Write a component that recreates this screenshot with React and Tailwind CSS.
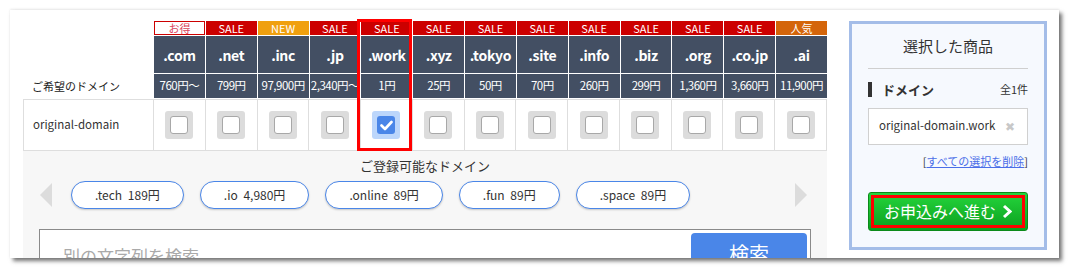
import React from "react";

const domains = [
  { tld: ".com", price: "760円〜", badge: "お得", kind: "deal" },
  { tld: ".net", price: "799円", badge: "SALE", kind: "sale" },
  { tld: ".inc", price: "97,900円", badge: "NEW", kind: "new" },
  { tld: ".jp", price: "2,340円〜", badge: "SALE", kind: "sale" },
  { tld: ".work", price: "1円", badge: "SALE", kind: "sale", checked: true },
  { tld: ".xyz", price: "25円", badge: "SALE", kind: "sale" },
  { tld: ".tokyo", price: "50円", badge: "SALE", kind: "sale" },
  { tld: ".site", price: "70円", badge: "SALE", kind: "sale" },
  { tld: ".info", price: "260円", badge: "SALE", kind: "sale" },
  { tld: ".biz", price: "299円", badge: "SALE", kind: "sale" },
  { tld: ".org", price: "1,360円", badge: "SALE", kind: "sale" },
  { tld: ".co.jp", price: "3,660円", badge: "SALE", kind: "sale" },
  { tld: ".ai", price: "11,900円", badge: "人気", kind: "hot" },
];

const suggestions = [".tech 189円", ".io 4,980円", ".online 89円", ".fun 89円", ".space 89円"];

const badgeClass = {
  deal: "bg-white border border-[#cc0000] text-[#d9435a]",
  sale: "bg-[#cc0000] text-white",
  new: "bg-[#f0a00f] text-white",
  hot: "bg-[#d4650a] text-white",
};

const Checkbox = ({ checked }) =>
  checked ? (
    <div className="w-[28px] h-[28px] rounded-[3px] bg-[#bcd6fb] flex items-center justify-center">
      <div className="w-[18px] h-[18px] rounded-[3px] bg-[#4a86e8] flex items-center justify-center">
        <svg width="13" height="11" viewBox="0 0 13 11">
          <path d="M1.5 5.5 L5 9 L11.5 2" fill="none" stroke="white" strokeWidth="2.6" strokeLinecap="round" strokeLinejoin="round" />
        </svg>
      </div>
    </div>
  ) : (
    <div className="w-[28px] h-[28px] rounded-[3px] bg-[#dcdcdc] flex items-center justify-center">
      <div className="w-[18px] h-[18px] rounded-[3px] bg-white border border-[#a8a8a8]"></div>
    </div>
  );

const App = () => {
  return (
    <div
      className="w-[1070px] h-[269px] bg-white pt-[10px] pl-[10px]"
      style={{ fontFamily: '"Noto Sans CJK JP", "DejaVu Sans", sans-serif' }}
    >
      <div className="w-[1049px] h-[248px] bg-white overflow-hidden shadow-[3px_3px_4px_rgba(0,0,0,0.55),0_-1px_2px_rgba(0,0,0,0.08)] flex pl-[13px] pt-[11px] text-[#333]">
        {/* left column */}
        <div className="w-[804px] flex flex-col">
          <div className="relative">
            {/* header */}
            <div className="grid grid-cols-[130px_repeat(13,minmax(0,1fr))] gap-x-px">
              <div className="flex items-end h-[77px]">
                <div className="h-[24px] flex items-center pl-[9px] text-[11px] leading-none text-[#222]">ご希望のドメイン</div>
              </div>
              {domains.map((d) => (
                <div key={d.tld} className="flex flex-col gap-y-px">
                  <div className={`h-[14px] flex items-center justify-center text-[11px] leading-none ${badgeClass[d.kind]}`}>
                    {d.badge}
                  </div>
                  <div className="h-[37px] bg-[#434f63] flex items-center justify-center text-white font-bold text-[14px] leading-none tracking-[-0.3px]">
                    {d.tld}
                  </div>
                  <div className="h-[24px] bg-[#434f63] flex items-center justify-center text-white text-[11.5px] leading-none tracking-[-0.5px] whitespace-nowrap">
                    {d.price}
                  </div>
                </div>
              ))}
            </div>
            {/* checkbox row */}
            <div className="mt-px grid grid-cols-[129px_repeat(13,minmax(0,1fr))] gap-x-px bg-[#dedede] border border-[#dedede] h-[52px]">
              <div className="bg-white flex items-center pl-[9px] text-[11.5px] text-[#333]">original-domain</div>
              {domains.map((d) => (
                <div key={d.tld} className="bg-white flex items-center justify-center">
                  <Checkbox checked={d.checked} />
                </div>
              ))}
            </div>
            {/* highlight overlay */}
            <div className="absolute left-[334px] top-[-2px] w-[55px] h-[132px] border-[3px] border-[#ff0000] pointer-events-none"></div>
          </div>

          {/* suggestions */}
          <div className="flex-1 bg-[#f7f7f7] flex flex-col pt-[6px]">
            <div className="text-center text-[13px] leading-[18px] text-[#333]">ご登録可能なドメイン</div>
            <div className="mt-[6px] flex items-center pl-[17px] pr-[20px]">
              <svg width="12" height="24" viewBox="0 0 12 24">
                <path d="M12 0 L0 12 L12 24 Z" fill="#dcdcdc" />
              </svg>
              <div className="flex-1 flex gap-[16px] pl-[19px]">
                {suggestions.map((s) => (
                  <div
                    key={s}
                    className="h-[28px] px-[23px] rounded-full border border-[#4a86e8] bg-white shadow-[0_1px_2px_rgba(0,0,0,0.2)] flex items-center text-[12px] text-[#333] whitespace-nowrap [word-spacing:3px]"
                  >
                    {s}
                  </div>
                ))}
              </div>
              <svg width="12" height="24" viewBox="0 0 12 24">
                <path d="M0 0 L12 12 L0 24 Z" fill="#dcdcdc" />
              </svg>
            </div>
            <div className="mt-[20px] mx-[16px] h-[50px] bg-white border border-[#8a8a8a] flex justify-between pl-[23px] pr-[3px] pt-[3px]">
              <div className="pt-[14px] text-[17px] leading-none text-[#aaa]">別の文字列を検索</div>
              <div className="w-[116px] h-[46px] bg-[#4a86e8] rounded-t-[4px] flex justify-center pt-[11px] text-white text-[20px] leading-none">
                検索
              </div>
            </div>
          </div>
        </div>

        {/* right panel */}
        <div className="ml-[22px] w-[198px] h-[229px] border-[3px] border-[#a4bde8] bg-[#f6f9fe] px-[16px] flex flex-col">
          <div className="h-[45px] border-b border-[#cfcfcf] flex items-center justify-center text-[15px] text-[#333]">
            選択した商品
          </div>
          <div className="mt-[12px] flex items-center justify-between">
            <div className="flex items-center">
              <div className="w-[4px] h-[15px] bg-[#333]"></div>
              <div className="ml-[10px] font-bold text-[13px] leading-none text-[#333]">ドメイン</div>
            </div>
            <div className="text-[11px] text-[#333]">全1件</div>
          </div>
          <div className="mt-[10px] h-[37px] bg-white border border-[#d0d0d0] flex items-center justify-between pl-[10px] pr-[12px]">
            <span className="text-[11.5px] text-[#333]">original-domain.work</span>
            <span className="text-[12px] font-bold text-[#c8c8c8] leading-none">✖</span>
          </div>
          <div className="mt-[8px] text-right text-[11px] leading-[16px] text-[#333]">
            [<span className="text-[#4a6ee8] underline">すべての選択を削除</span>]
          </div>
          <div className="mt-[23px] h-[39px] rounded-[3px] border border-[#0c8a1a] bg-gradient-to-b from-[#24d53c] to-[#0aa01e] p-[2px]">
            <div className="h-full border-[3px] border-[#ff0000] flex items-center justify-center gap-[6px] text-white text-[16px] leading-none">
              <span>お申込みへ進む</span>
              <svg width="10" height="15" viewBox="0 0 10 15">
                <path d="M2 2 L8 7.5 L2 13" fill="none" stroke="white" strokeWidth="3" />
              </svg>
            </div>
          </div>
        </div>
      </div>
    </div>
  );
};

export default App;
